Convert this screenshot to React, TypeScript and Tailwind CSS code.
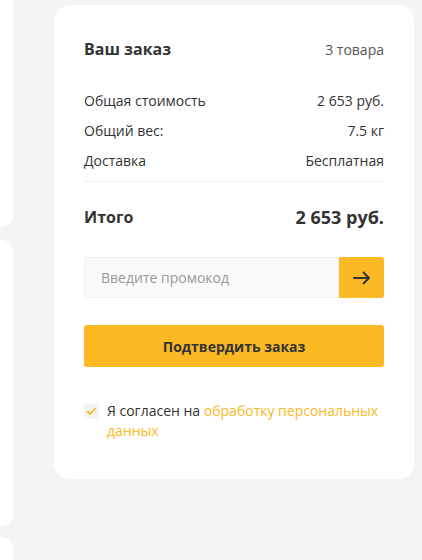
import React from "react";

export default function App() {
  const font = { fontFamily: '"Open Sans", "Noto Sans", sans-serif' };
  return (
    <div className="w-[422px] h-[560px] bg-[#f4f4f6] flex overflow-hidden" style={font}>
      <div className="w-[13px] flex flex-col shrink-0">
        <div className="h-[227px] shrink-0 bg-white rounded-br-[12px]" />
        <div className="mt-[13px] h-[286px] shrink-0 bg-white rounded-r-[12px]" />
        <div className="mt-[11px] h-[100px] shrink-0 bg-white rounded-tr-[12px]" />
      </div>
      <div className="ml-[41px] mt-[5px] w-[360px] h-[474px] shrink-0 bg-white rounded-[16px] px-[30px] pt-[34px] flex flex-col">
        <div className="flex items-center justify-between h-[20px]">
          <span className="text-[16px] font-bold text-[#333]">Ваш заказ</span>
          <span className="text-[14px] text-[#555]">3 товара</span>
        </div>
        <div className="mt-[31px] flex flex-col gap-[10px] text-[14px] text-[#333]">
          <div className="flex justify-between h-[20px] items-center">
            <span>Общая стоимость</span>
            <span>2 653 руб.</span>
          </div>
          <div className="flex justify-between h-[20px] items-center">
            <span>Общий вес:</span>
            <span>7.5 кг</span>
          </div>
          <div className="flex justify-between h-[20px] items-center">
            <span>Доставка</span>
            <span>Бесплатная</span>
          </div>
        </div>
        <div className="mt-[11px] h-px bg-[#eeeeee]" />
        <div className="mt-[24px] flex justify-between items-center h-[22px]">
          <span className="text-[16px] font-bold text-[#333]">Итого</span>
          <span className="text-[18px] font-bold text-[#333]">2 653 руб.</span>
        </div>
        <div className="mt-[29px] flex h-[41px]">
          <div className="flex-1 bg-[#fafafa] border border-[#f0f0f0] rounded-l-[3px] flex items-center pl-[16px] text-[14px] text-[#999]">
            Введите промокод
          </div>
          <div className="w-[45px] bg-[#fbb923] rounded-r-[3px] flex items-center justify-center">
            <svg width="18" height="14" viewBox="0 0 18 14" fill="none">
              <path d="M1 7H16M10.5 1.5L16 7L10.5 12.5" stroke="#333" strokeWidth="2" strokeLinecap="round" strokeLinejoin="round" />
            </svg>
          </div>
        </div>
        <div className="mt-[27px] h-[42px] bg-[#fbb923] rounded-[3px] flex items-center justify-center text-[14px] font-bold text-[#333]">
          Подтвердить заказ
        </div>
        <div className="mt-[34px] flex gap-[8px]">
          <div className="mt-[3px] w-[15px] h-[15px] shrink-0 bg-[#f3f3f3] rounded-[2px] flex items-center justify-center">
            <svg width="11" height="9" viewBox="0 0 11 9" fill="none">
              <path d="M1.5 4.5L4.2 7L9.5 1.5" stroke="#fbb923" strokeWidth="1.8" strokeLinecap="round" strokeLinejoin="round" />
            </svg>
          </div>
          <p className="text-[14px] leading-[20px] text-[#333]">
            <span>Я согласен на </span>
            <span className="text-[#fbb923]">обработку персональных данных</span>
          </p>
        </div>
      </div>
    </div>
  );
}
